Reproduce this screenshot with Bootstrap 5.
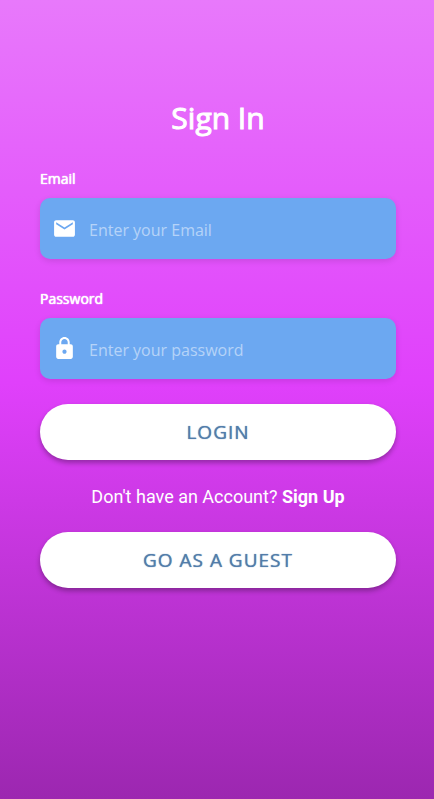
<!DOCTYPE html>
<html lang="en">
<head>
<meta charset="utf-8">
<meta name="viewport" content="width=device-width, initial-scale=1">
<title>Sign In</title>
<link href="https://cdn.jsdelivr.net/npm/bootstrap@5.3.0/dist/css/bootstrap.min.css" rel="stylesheet">
<style>
  body {
    font-family: "Open Sans", sans-serif;
    background: linear-gradient(#e879fb, #e040fb 48%, #9c27b0);
  }
  .sign-in { padding: 96px 38px 40px 40px; }
  .title { font-size: 30px; line-height: 44px; font-weight: 400; margin-bottom: 29px; -webkit-text-stroke: 1px #fff; }
  .field-label { font-size: 14px; line-height: 20px; text-shadow: 0 0 1px #fff, 0 0 1px #fff; margin-bottom: 9px; }
  .field {
    background: #6ca8f1;
    border-radius: 10px;
    box-shadow: 0 2px 6px rgba(0, 0, 0, .12);
    height: 61px;
    padding: 0 12px;
    gap: 12px;
    margin-bottom: 30px;
  }
  .field.last { margin-bottom: 25px; }
  .field input { font-size: 16px; line-height: 24px; padding: 2px 0 0; }
  .field input::placeholder { color: rgba(255, 255, 255, .5); opacity: 1; }
  .pill {
    height: 56px;
    padding: 0;
    font-size: 19px;
    font-weight: 400;
    letter-spacing: 1px;
    color: #527daa;
    text-shadow: 0 0 1px #527daa;
    box-shadow: 0 3px 5px rgba(0, 0, 0, .3);
  }
  .pill:hover { background: #f4f4f4; color: #527daa; }
  .sign-up { font-family: Roboto, sans-serif; font-size: 18px; line-height: 24px; margin: 25px 0 23px; }
</style>
</head>
<body class="min-vh-100 text-white">
<main class="sign-in">
  <h1 class="title text-center">Sign In</h1>
  <form>
    <label class="field-label d-block" for="email">Email</label>
    <div class="field d-flex align-items-center">
      <svg class="flex-shrink-0" width="25" height="25" viewBox="0 0 24 24" fill="#fff" aria-hidden="true"><path d="M20 4H4c-1.100 0-1.990.9-1.990 2L2 18c0 1.100.9 2 2 2h16c1.100 0 2-.9 2-2V6c0-1.100-.9-2-2-2zm0 4l-8 5-8-5V6l8 5 8-5v2z"/></svg>
      <input class="form-control border-0 bg-transparent shadow-none text-white" id="email" type="email" placeholder="Enter your Email">
    </div>
    <label class="field-label d-block" for="password">Password</label>
    <div class="field last d-flex align-items-center">
      <svg class="flex-shrink-0" width="25" height="25" viewBox="0 0 24 24" fill="#fff" aria-hidden="true"><path d="M18 8h-1V6c0-2.760-2.240-5-5-5S7 3.240 7 6v2H6c-1.100 0-2 .9-2 2v10c0 1.100.9 2 2 2h12c1.100 0 2-.9 2-2V10c0-1.100-.9-2-2-2zm-6 9c-1.100 0-2-.9-2-2s.9-2 2-2 2 .9 2 2-.9 2-2 2zm3.100-9H8.900V6c0-1.710 1.390-3.100 3.100-3.100s3.100 1.390 3.100 3.100v2z"/></svg>
      <input class="form-control border-0 bg-transparent shadow-none text-white" id="password" type="password" placeholder="Enter your password">
    </div>
    <button class="pill btn btn-light bg-white border-0 rounded-pill w-100" type="submit">LOGIN</button>
  </form>
  <p class="sign-up text-center">Don't have an Account? <a class="text-white text-decoration-none fw-bold" href="#">Sign Up</a></p>
  <button class="pill btn btn-light bg-white border-0 rounded-pill w-100" type="button">GO AS A GUEST</button>
</main>
<script src="https://cdn.jsdelivr.net/npm/bootstrap@5.3.0/dist/js/bootstrap.bundle.min.js"></script>
</body>
</html>
